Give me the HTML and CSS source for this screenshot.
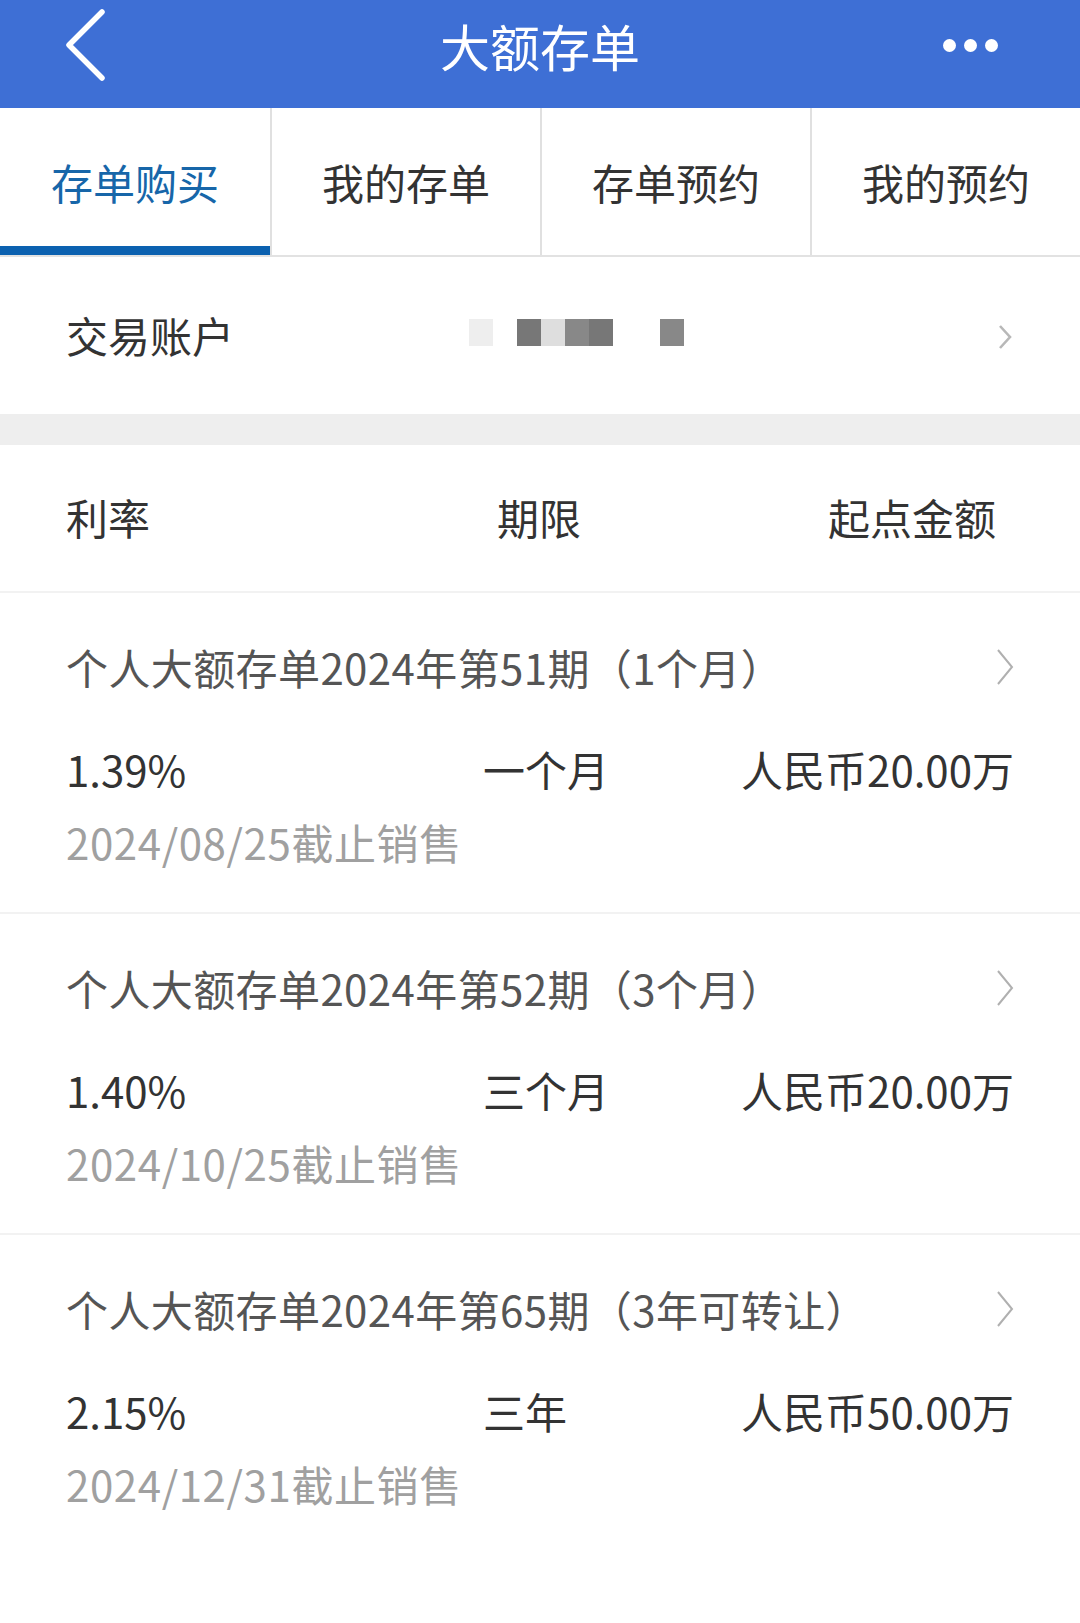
FILE: index.html
```html
<!DOCTYPE html>
<html lang="zh-CN">
<head>
    <meta charset="UTF-8">
    <meta name="viewport" content="width=device-width, initial-scale=1.0">
    <title>大额存单</title>
    <link rel="stylesheet" href="styles.css">
</head>
<body>
    <div class="topbar">
        <div class="back">
            <svg width="44" height="74" viewBox="0 0 44 74">
                <polyline points="38,4 5,37 38,70" fill="none" stroke="#fff" stroke-width="5.5" stroke-linecap="round" stroke-linejoin="round"/>
            </svg>
        </div>
        <div class="title">大额存单</div>
        <div class="more">
            <span class="dot"></span><span class="dot"></span><span class="dot"></span>
        </div>
    </div>

    <div class="tabs">
        <div class="tab active">存单购买</div>
        <div class="tab">我的存单</div>
        <div class="tab">存单预约</div>
        <div class="tab">我的预约</div>
    </div>

    <div class="account-row">
        <div class="label">交易账户</div>
        <div class="account-masked">
            <span class="px px-a"></span>
            <span class="px px-gap"></span>
            <span class="px px-b"></span>
            <span class="px px-c"></span>
            <span class="px px-d"></span>
            <span class="px px-b"></span>
            <span class="px px-gap wide"></span>
            <span class="px px-d"></span>
        </div>
        <svg class="chevron small" width="18" height="28" viewBox="0 0 18 28">
            <polyline points="4,3 14,14 4,25" fill="none" stroke="#b8b8b8" stroke-width="2.6"/>
        </svg>
    </div>

    <div class="spacer"></div>

    <div class="list-head">
        <div class="col-rate">利率</div>
        <div class="col-term">期限</div>
        <div class="col-min">起点金额</div>
    </div>

    <div class="product">
        <div class="product-title">
            <span>个人大额存单2024年第51期（1个月）</span>
            <svg class="chevron" width="20" height="38" viewBox="0 0 20 38">
                <polyline points="3,2 17,19 3,36" fill="none" stroke="#b0b0b0" stroke-width="2"/>
            </svg>
        </div>
        <div class="product-values">
            <div>1.39%</div>
            <div>一个月</div>
            <div class="amount">人民币20.00万</div>
        </div>
        <div class="product-date">2024/08/25截止销售</div>
    </div>

    <div class="product">
        <div class="product-title">
            <span>个人大额存单2024年第52期（3个月）</span>
            <svg class="chevron" width="20" height="38" viewBox="0 0 20 38">
                <polyline points="3,2 17,19 3,36" fill="none" stroke="#b0b0b0" stroke-width="2"/>
            </svg>
        </div>
        <div class="product-values">
            <div>1.40%</div>
            <div>三个月</div>
            <div class="amount">人民币20.00万</div>
        </div>
        <div class="product-date">2024/10/25截止销售</div>
    </div>

    <div class="product last">
        <div class="product-title">
            <span>个人大额存单2024年第65期（3年可转让）</span>
            <svg class="chevron" width="20" height="38" viewBox="0 0 20 38">
                <polyline points="3,2 17,19 3,36" fill="none" stroke="#b0b0b0" stroke-width="2"/>
            </svg>
        </div>
        <div class="product-values">
            <div>2.15%</div>
            <div>三年</div>
            <div class="amount">人民币50.00万</div>
        </div>
        <div class="product-date">2024/12/31截止销售</div>
    </div>
</body>
</html>
```

FILE: styles.css
```css
body {
    margin: 0;
    background: #fff;
    font-family: "Noto Sans CJK SC", "Noto Sans", sans-serif;
    color: #333;
}

.topbar {
    height: 108px;
    box-sizing: border-box;
    padding-bottom: 18px;
    background-color: #3e6fd5;
    display: grid;
    grid-template-columns: 1fr auto 1fr;
    align-items: center;
}

.back {
    padding-left: 64px;
    display: flex;
    align-items: center;
}

.title {
    color: #fff;
    font-size: 50px;
    line-height: 60px;
}

.more {
    justify-self: end;
    padding-right: 82px;
    display: flex;
    gap: 8px;
}

.dot {
    width: 13px;
    height: 13px;
    border-radius: 50%;
    background: #fff;
}

.tabs {
    display: grid;
    grid-template-columns: repeat(4, 1fr);
    height: 147px;
    border-bottom: 2px solid #e2e2e2;
}

.tab {
    display: flex;
    align-items: center;
    justify-content: center;
    font-size: 42px;
    color: #333;
    border-left: 2px solid #e0e0e0;
    padding-top: 0;
    box-sizing: border-box;
}

.tab:first-child {
    border-left: none;
}

.tab.active {
    color: #1766a9;
    border-bottom: 9px solid #0b61b0;
    padding-top: 9px;
}

.account-row {
    height: 157px;
    display: flex;
    align-items: center;
    padding: 0 66px 2px 66px;
    box-sizing: border-box;
}

.account-row .label {
    font-size: 42px;
    width: 403px;
}

.account-masked {
    flex: 1;
    display: flex;
    height: 27px;
    margin-top: -4px;
    filter: blur(0.6px);
}

.px {
    width: 24px;
    height: 27px;
}

.px-a { background: #eeeeee; }
.px-b { background: #777; }
.px-c { background: #dedede; }
.px-d { background: #888; }
.px-gap { background: transparent; }
.px-gap.wide { width: 47px; }

.chevron.small {
    margin-top: 4px;
}

.spacer {
    height: 31px;
    background: #eeeeee;
}

.list-head {
    height: 148px;
    box-sizing: border-box;
    padding: 0 84px 3px 66px;
    display: grid;
    grid-template-columns: 1fr 1fr 1fr;
    align-items: center;
    font-size: 42px;
    color: #333;
    border-bottom: 2px solid #f2f2f2;
}

.col-term {
    text-align: center;
    padding-left: 16px;
}

.col-min {
    text-align: right;
}

.product {
    height: 321px;
    box-sizing: border-box;
    padding: 44px 66px 0 66px;
    border-bottom: 2px solid #f2f2f2;
}

.product.last {
    border-bottom: none;
}

.product-title {
    display: flex;
    align-items: center;
    justify-content: space-between;
    font-size: 42px;
    line-height: 60px;
    color: #555;
    letter-spacing: 0.4px;
}

.product-title .chevron {
    margin-right: -1px;
}

.product-values {
    margin-top: 42px;
    display: grid;
    grid-template-columns: 417px 1fr auto;
    font-size: 42px;
    line-height: 60px;
    color: #333;
}

.amount {
    text-align: right;
}

.product-date {
    margin-top: 13px;
    font-size: 42px;
    line-height: 60px;
    color: #a0a0a0;
    letter-spacing: 0.6px;
}
```
